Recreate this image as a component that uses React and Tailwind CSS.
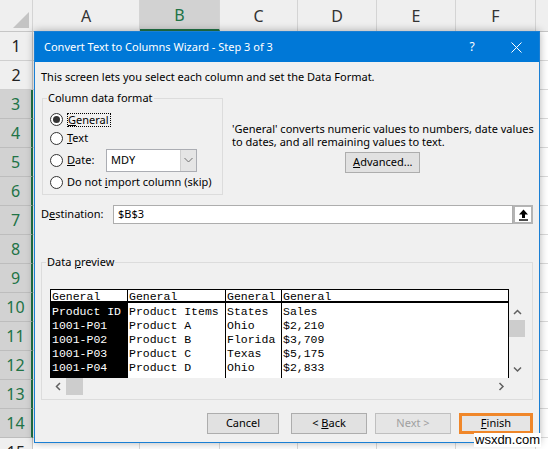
import React from "react";

const cols = [
  { l: "A", w: "w-[107px]" },
  { l: "B", w: "w-[80px]", sel: true },
  { l: "C", w: "w-[78px]" },
  { l: "D", w: "w-[79px]" },
  { l: "E", w: "w-[79px]" },
  { l: "F", w: "w-[80px]" },
  { l: "G", w: "w-[80px]" },
];

const rows = [1, 2, 3, 4, 5, 6, 7, 8, 9, 10, 11, 12, 13, 14, 15];

const preview = [
  { w: "w-[77px]", head: "General", cells: ["Product ID", "1001-P01", "1001-P02", "1001-P03", "1001-P04"], sel: true },
  { w: "w-[98px]", head: "General", cells: ["Product Items", "Product A", "Product B", "Product C", "Product D"] },
  { w: "w-[56px]", head: "General", cells: ["States", "Ohio", "Florida", "Texas", "Ohio"] },
  { w: "w-[227px]", head: "General", cells: ["Sales", "$2,210", "$3,709", "$5,175", "$2,833"] },
];

function Radio({ checked }) {
  return (
    <span className="w-[13px] h-[13px] ml-[3px] mr-[4px] rounded-full border border-[#333] bg-white flex items-center justify-center shrink-0">
      {checked && <span className="w-[7px] h-[7px] rounded-full bg-[#333]" />}
    </span>
  );
}

function Chevron({ dir }) {
  const d = {
    up: "M1 5 L4.5 1.5 L8 5",
    down: "M1 1.5 L4.5 5 L8 1.5",
    left: "M5 1 L1.5 4.5 L5 8",
    right: "M1.5 1 L5 4.5 L1.5 8",
  }[dir];
  const vert = dir === "up" || dir === "down";
  return (
    <svg width={vert ? 9 : 7} height={vert ? 7 : 9} viewBox={vert ? "0 0 9 7" : "0 0 7 9"}>
      <path d={d} fill="none" stroke="#606060" strokeWidth="1.5" />
    </svg>
  );
}

function Btn({ children, className = "" }) {
  return (
    <div className={`h-[21px] flex items-center justify-center border ${className}`}>{children}</div>
  );
}

export default function App() {
  return (
    <div className="relative w-[548px] h-[449px] overflow-hidden bg-white font-['Noto_Sans',sans-serif]">
      {/* Excel column headers */}
      <div className="flex h-[32px] bg-[#efefef] border-b border-[#c6c6c6] text-[16px] text-[#333]">
        <div className="w-[33px] shrink-0 border-r border-[#d4d4d4] flex items-end justify-end pr-[3px] pb-[3px]">
          <svg width="16" height="16" viewBox="0 0 16 16">
            <path d="M16 0 L16 16 L0 16 Z" fill="#c4c4c4" />
          </svg>
        </div>
        {cols.map((c) => (
          <div
            key={c.l}
            className={`${c.w} shrink-0 flex items-center justify-center border-r border-[#d4d4d4] ${
              c.sel ? "bg-[#d2d2d2] text-[#217346] border-b-2 border-b-[#217346]" : ""
            }`}
          >
            {c.l}
          </div>
        ))}
      </div>

      {/* Excel rows */}
      {rows.map((r) => {
        const sel = r >= 3 && r <= 14;
        return (
          <div key={r} className="flex h-[29px]">
            <div
              className={`w-[33px] shrink-0 flex items-center justify-center text-[16px] border-b ${
                sel
                  ? "bg-[#d2d2d2] text-[#217346] border-b-[#bdbdbd] border-r-2 border-r-[#217346]"
                  : "bg-[#efefef] text-[#222] border-b-[#cfcfcf] border-r border-r-[#c6c6c6]"
              }`}
            >
              {r}
            </div>
            {cols.map((c) => (
              <div key={c.l} className={`${c.w} shrink-0 border-r border-b border-[#dadada]`} />
            ))}
          </div>
        );
      })}

      {/* Wizard dialog */}
      <div className="absolute left-[34px] top-[31px] w-[506px] h-[412px] bg-[#f0f0f0] border border-[#1a7fd4] shadow-[0_0_8px_rgba(0,0,0,0.3)] flex flex-col text-[11px] text-black">
        <div className="h-[30px] shrink-0 bg-[#0078d7] text-white flex items-center pl-[9px]">
          <span className="flex-1">Convert Text to Columns Wizard - Step 3 of 3</span>
          <span className="w-[20px] text-center text-[12px] mr-[11px]">?</span>
          <div className="w-[46px] h-full flex items-center justify-center">
            <svg width="11" height="11" viewBox="0 0 11 11">
              <path d="M0.5 0.5 L10.5 10.5 M10.5 0.5 L0.5 10.5" stroke="white" strokeWidth="1" />
            </svg>
          </div>
        </div>

        <div className="flex-1 px-[6px]">
          <p className="mt-[7px] leading-[16px]">This screen lets you select each column and set the Data Format.</p>

          <div className="flex mt-[6px]">
            <fieldset className="ml-[1px] w-[181px] shrink-0 border border-[#dcdcdc] pl-[4px] pb-[2px]">
              <legend className="px-[1px] leading-[14px]">Column data format</legend>
              <div className="mt-[5px] flex flex-col">
                <div className="h-[19px] flex items-center">
                  <Radio checked />
                  <span className="border border-dotted border-black leading-[12px] pr-[1px]">
                    <u>G</u>eneral
                  </span>
                </div>
                <div className="h-[19px] flex items-center">
                  <Radio />
                  <span>
                    <u>T</u>ext
                  </span>
                </div>
                <div className="h-[24px] flex items-center">
                  <Radio />
                  <span className="w-[39px]">
                    <u>D</u>ate:
                  </span>
                  <div className="w-[91px] h-[23px] flex bg-white border border-[#abadb3]">
                    <span className="flex-1 pl-[4px] flex items-center">MDY</span>
                    <span className="w-[16px] bg-[#e5e5e5] border-l border-[#cfcfcf] flex items-center justify-center">
                      <svg width="9" height="6" viewBox="0 0 9 6">
                        <path d="M0.5 1 L4.5 5 L8.5 1" fill="none" stroke="#707070" strokeWidth="1" />
                      </svg>
                    </span>
                  </div>
                </div>
                <div className="h-[20px] flex items-center">
                  <Radio />
                  <span className="whitespace-nowrap">
                    Do not <u>i</u>mport column (skip)
                  </span>
                </div>
              </div>
            </fieldset>

            <div className="flex-1 ml-[9px] pt-[31px] flex flex-col">
              <p className="leading-[13px] whitespace-nowrap">
                'General' converts numeric values to numbers, date values
                <br />
                to dates, and all remaining values to text.
              </p>
              <div className="flex justify-center mt-[4px]">
                <Btn className="w-[75px] h-[20px] bg-[#e1e1e1] border-[#adadad]">
                  <span>
                    <u>A</u>dvanced...
                  </span>
                </Btn>
              </div>
            </div>
          </div>

          <div className="flex items-center mt-[10px] h-[19px]">
            <span className="w-[72px] shrink-0">
              D<u>e</u>stination:
            </span>
            <div className="flex-1 h-full bg-white border border-[#adadad] pl-[4px] flex items-center">$B$3</div>
            <div className="w-[20px] h-full border-2 border-[#b4b4b4] bg-white flex items-center justify-center">
              <svg width="11" height="12" viewBox="0 0 11 12">
                <path d="M5.5 0.5 L10 5.5 L7 5.5 L7 9 L4 9 L4 5.5 L1 5.5 Z" fill="black" />
                <rect x="1" y="10.3" width="9" height="1.4" fill="black" />
              </svg>
            </div>
          </div>

          <fieldset className="mt-[31px] border border-[#dcdcdc] pl-[4px] pb-[4px]">
            <legend className="px-[1px] leading-[14px]">
              Data <u>p</u>review
            </legend>
            <div className="mt-[20px] ml-[4px] flex">
              <div className="flex flex-col">
                <div className="flex h-[89px] overflow-hidden border-l border-t border-black bg-white font-['Liberation_Mono',monospace] text-[11.5px]">
                  {preview.map((c, i) => (
                    <div key={i} className={`${c.w} shrink-0 flex flex-col border-r border-black`}>
                      <div className="h-[13px] leading-[14px] pl-[1px] border-b-2 border-black underline whitespace-nowrap">
                        {c.head}
                      </div>
                      <div className={`flex-1 pt-[2px] ${c.sel ? "bg-black text-white" : ""}`}>
                        {c.cells.map((t, j) => (
                          <div key={j} className="h-[14px] leading-[14px] pl-[1px] whitespace-nowrap">
                            {t}
                          </div>
                        ))}
                      </div>
                    </div>
                  ))}
                </div>
                <div className="flex h-[17px] items-center">
                  <div className="w-[16px] flex justify-center">
                    <Chevron dir="left" />
                  </div>
                  <div className="w-[17px] h-[17px] bg-[#cdcdcd]" />
                  <div className="flex-1" />
                  <div className="w-[16px] flex justify-center">
                    <Chevron dir="right" />
                  </div>
                </div>
              </div>
              <div className="w-[16px] h-[89px] flex flex-col">
                <div className="h-[15px]" />
                <div className="h-[16px] flex items-center justify-center">
                  <Chevron dir="up" />
                </div>
                <div className="h-[17px] bg-[#cdcdcd]" />
                <div className="flex-1" />
                <div className="h-[17px] flex items-center justify-center">
                  <Chevron dir="down" />
                </div>
              </div>
            </div>
          </fieldset>

          <div className="flex justify-end mt-[13px]">
            <Btn className="w-[72px] bg-[#e1e1e1] border-[#adadad]">Cancel</Btn>
            <Btn className="w-[76px] ml-[12px] bg-[#e1e1e1] border-[#adadad]">
              <span>
                &lt; <u>B</u>ack
              </span>
            </Btn>
            <Btn className="w-[76px] ml-[8px] bg-[#e5e5e5] border-[#bfbfbf] text-[#a0a0a0]">Next &gt;</Btn>
            <Btn className="w-[74px] ml-[8px] bg-[#e5e5e5] border-[3px] border-[#f0872a]">
              <span>
                <u>F</u>inish
              </span>
            </Btn>
          </div>
        </div>
      </div>

      {/* watermark */}
      <div className="absolute left-[474px] top-[433px] px-[1px] bg-white text-[13px] leading-[14px] text-black font-['Liberation_Sans',sans-serif]">
        wsxdn.com
      </div>
    </div>
  );
}
